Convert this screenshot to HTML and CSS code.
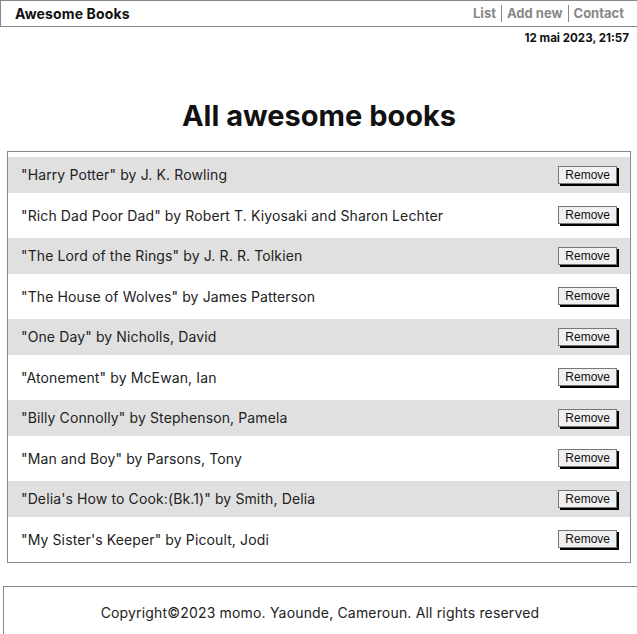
FILE: index.html
```html
<!DOCTYPE html>
<html lang="en">
<head>
<meta charset="utf-8">
<title>Awesome Books</title>
<link rel="stylesheet" href="styles.css">
</head>
<body>
<header class="topbar">
  <span class="brand">Awesome Books</span>
  <nav class="nav">
    <a class="nav-link" href="#">List</a>
    <a class="nav-link" href="#">Add new</a>
    <a class="nav-link" href="#">Contact</a>
  </nav>
</header>
<p class="date">12 mai 2023, 21:57</p>
<main class="main">
  <h1 class="title">All awesome books</h1>
  <ul class="books">
    <li class="book"><span>"Harry Potter" by J. K. Rowling</span><button class="remove">Remove</button></li>
    <li class="book"><span>"Rich Dad Poor Dad" by Robert T. Kiyosaki and Sharon Lechter</span><button class="remove">Remove</button></li>
    <li class="book"><span>"The Lord of the Rings" by J. R. R. Tolkien</span><button class="remove">Remove</button></li>
    <li class="book"><span>"The House of Wolves" by James Patterson</span><button class="remove">Remove</button></li>
    <li class="book"><span>"One Day" by Nicholls, David</span><button class="remove">Remove</button></li>
    <li class="book"><span>"Atonement" by McEwan, Ian</span><button class="remove">Remove</button></li>
    <li class="book"><span>"Billy Connolly" by Stephenson, Pamela</span><button class="remove">Remove</button></li>
    <li class="book"><span>"Man and Boy" by Parsons, Tony</span><button class="remove">Remove</button></li>
    <li class="book"><span>"Delia's How to Cook:(Bk.1)" by Smith, Delia</span><button class="remove">Remove</button></li>
    <li class="book"><span>"My Sister's Keeper" by Picoult, Jodi</span><button class="remove">Remove</button></li>
  </ul>
</main>
<footer class="footer">
  <p>Copyright©2023 momo. Yaounde, Cameroun. All rights reserved</p>
</footer>
</body>
</html>
```
FILE: styles.css
```css
* { box-sizing: border-box; }
html, body { margin: 0; padding: 0; }
body {
  font-family: Inter, "Noto Sans", sans-serif;
  color: #111;
  background: #fff;
  overflow: hidden;
}
.topbar {
  display: flex;
  justify-content: space-between;
  align-items: center;
  height: 27px;
  width: 640px;
  border: 1px solid #888;
  padding: 0 15px 0 14px;
}
.brand {
  font-weight: 700;
  font-size: 14px;
  letter-spacing: 0.15px;
}
.nav {
  display: flex;
  align-items: center;
}
.nav-link {
  color: #888;
  font-weight: 700;
  font-size: 13px;
  text-decoration: none;
  padding: 0 5px;
  border-left: 1px solid #888;
  line-height: 17px;
}
.nav-link:first-child { border-left: none; }
.nav-link:last-child { padding-right: 0; }
.date {
  margin: 4px 8px 0 0;
  text-align: right;
  font-size: 11.6px;
  font-weight: 700;
  line-height: 15px;
}
.main {
  padding: 0 6px 0 7px;
}
.title {
  margin: 53px 0 18px;
  text-align: center;
  font-size: 29px;
  line-height: 34px;
  font-weight: 700;
}
.books {
  list-style: none;
  margin: 0;
  padding: 5px 0;
  border: 1px solid #888;
  display: flex;
  flex-direction: column;
  gap: 5px;
}
.book {
  display: flex;
  justify-content: space-between;
  align-items: center;
  height: 35.5px;
  padding: 0 13px 0 13px;
  font-size: 14px;
  letter-spacing: 0.12px;
  color: #222;
}
.book:nth-child(odd) { background: #e0e0e0; }
.remove {
  font-family: "Liberation Sans", Arial, sans-serif;
  font-size: 12px;
  letter-spacing: 0;
  color: #111;
  background: #f0f0f0;
  border: 1px solid #777;
  box-shadow: 2px 2px 0 #000;
  padding: 1px 6px;
  height: 18px;
  line-height: 14px;
}
.footer {
  margin: 23px 0 0 3px;
  width: 640px;
  height: 52px;
  border: 1px solid #888;
  display: flex;
  align-items: center;
  justify-content: center;
  padding-right: 6px;
}
.footer p {
  margin: 0;
  font-size: 14px;
  letter-spacing: 0.17px;
  color: #222;
}
```
